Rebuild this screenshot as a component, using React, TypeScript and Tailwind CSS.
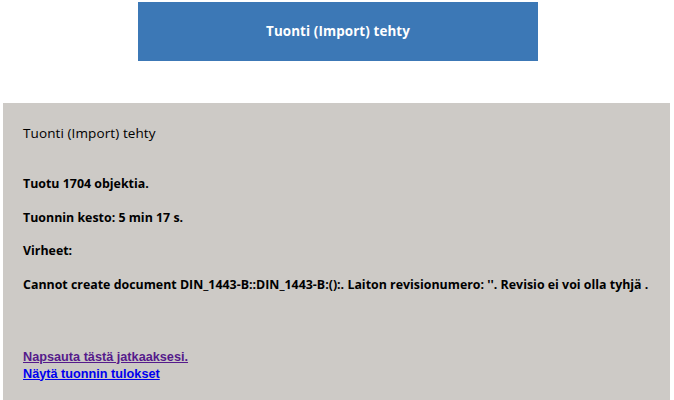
export default function App() {
  return (
    <div className="w-[674px] h-[400px] overflow-hidden bg-white font-['Open_Sans',sans-serif] text-black">
      {/* Banner */}
      <div className="pt-[2px] pl-[138px]">
        <div className="w-[400px] h-[59px] bg-[#3c78b6] flex items-center justify-center">
          <span className="text-white text-[13.4px] font-bold tracking-[0.1px]">Tuonti (Import) tehty</span>
        </div>
      </div>

      {/* Result panel */}
      <div className="mt-[42px] ml-[3px] w-[667px] h-[300px] bg-[#cdcac6] px-[20px] pt-[22px]">
        <p className="text-[13.5px] leading-[16px] tracking-[0.1px]">Tuonti (Import) tehty</p>
        <div className="mt-[35px] flex flex-col gap-[17.5px] text-[12.4px] font-bold leading-[16px] whitespace-nowrap">
          <p>Tuotu 1704 objektia.</p>
          <p>Tuonnin kesto: 5 min 17 s.</p>
          <p>Virheet:</p>
          <p>Cannot create document DIN_1443-B::DIN_1443-B:():. Laiton revisionumero: ''. Revisio ei voi olla tyhjä .</p>
        </div>
        <div className="mt-[56px] flex flex-col font-['Liberation_Sans',sans-serif] text-[12.7px] font-bold leading-[17px]">
          <a href="#" className="self-start text-[#551a8b] underline">Napsauta tästä jatkaaksesi.</a>
          <a href="#" className="self-start text-[#0000ee] underline">Näytä tuonnin tulokset</a>
        </div>
      </div>
    </div>
  )
}
